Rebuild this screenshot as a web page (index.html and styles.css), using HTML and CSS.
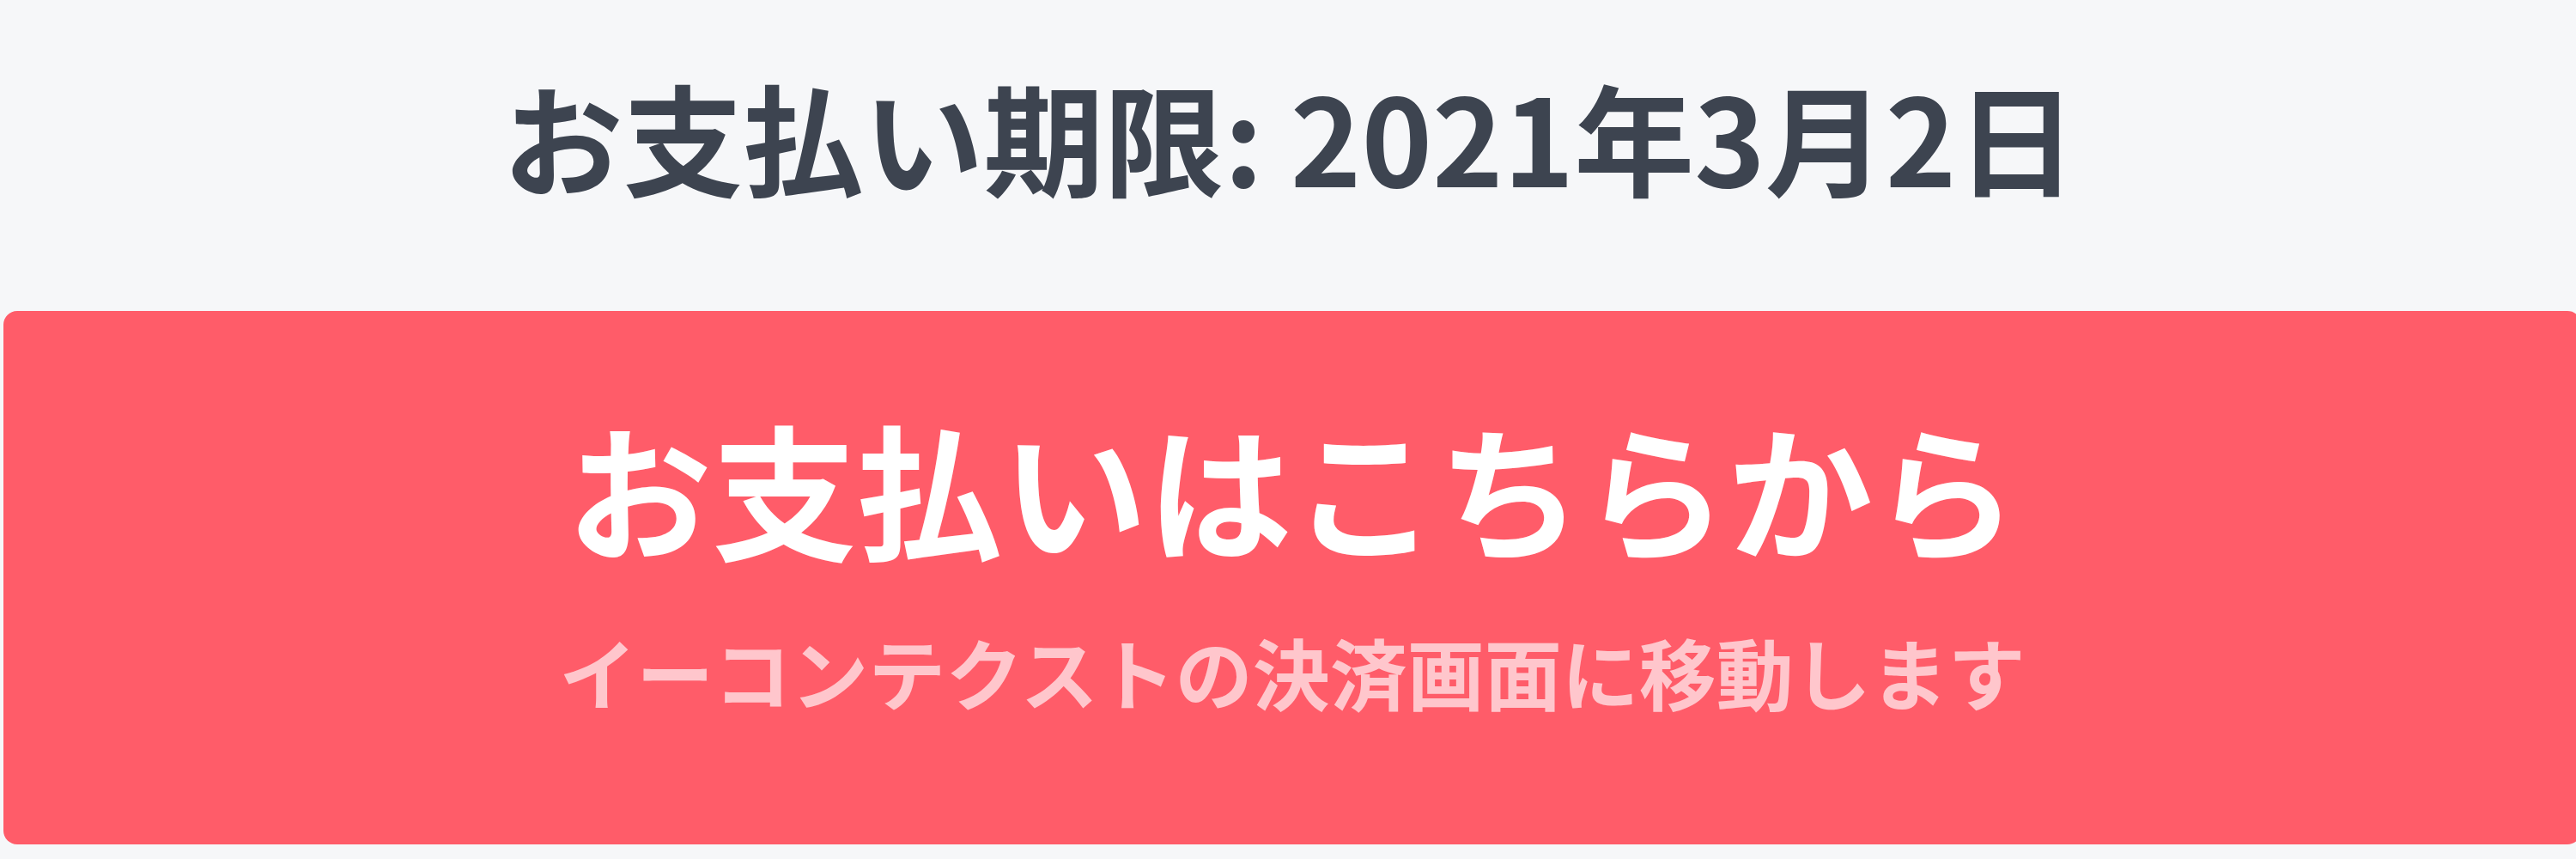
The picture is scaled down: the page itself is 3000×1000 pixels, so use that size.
FILE: index.html
```html
<!DOCTYPE html>
<html lang="ja">
<head>
  <meta charset="UTF-8">
  <meta name="viewport" content="width=device-width, initial-scale=1.0">
  <title>お支払い</title>
  <link rel="stylesheet" href="styles.css">
</head>
<body>
  <div class="payment">
    <h1 class="deadline">お支払い期限: 2021年3月2日</h1>

    <a class="pay-button" href="#">
      <span class="pay-title">お支払いはこちらから</span>
      <span class="pay-note">イーコンテクストの決済画面に移動します</span>
    </a>
  </div>
</body>
</html>
```

FILE: styles.css
```css
body {
  margin: 0;
  background: #f6f7f9;
  font-family: "Noto Sans CJK JP", "Noto Sans", sans-serif;
  overflow: hidden;
}
.payment {
  padding: 55px 0 0 4px;
}
.deadline {
  margin: 0;
  font-size: 140px;
  line-height: 204px;
  font-weight: 700;
  color: #3d4450;
  text-align: center;
}
.pay-button {
  box-sizing: border-box;
  display: flex;
  flex-direction: column;
  align-items: center;
  justify-content: center;
  gap: 58px;
  height: 621px;
  padding-bottom: 44px;
  margin: 103px -6px 0 0;
  background: #ff5c69;
  border-radius: 16px;
  text-decoration: none;
}
.pay-title {
  font-size: 169px;
  line-height: 1.2;
  font-weight: 700;
  color: #fff;
}
.pay-note {
  font-size: 90px;
  line-height: 1.2;
  font-weight: 700;
  color: #ffc6cc;
}
```
